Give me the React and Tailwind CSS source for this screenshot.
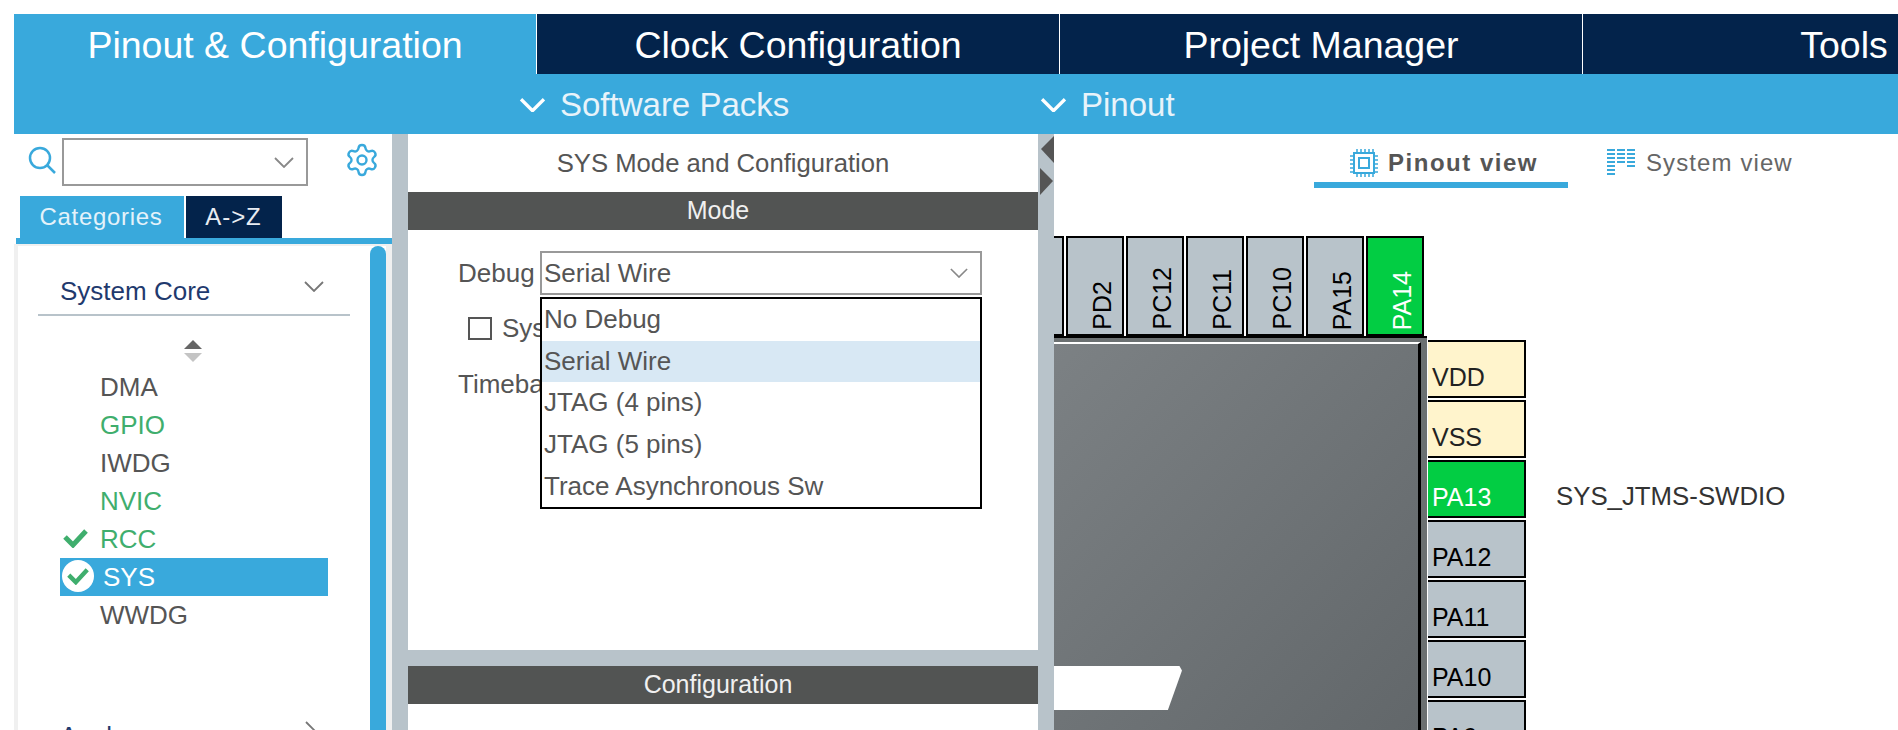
import React from 'react';
import { Settings } from 'lucide-react';

const navTabs = [
  { label: 'Pinout & Configuration', active: true },
  { label: 'Clock Configuration' },
  { label: 'Project Manager' },
  { label: 'Tools' },
];

const ipList = [
  { name: 'DMA' },
  { name: 'GPIO', green: true },
  { name: 'IWDG' },
  { name: 'NVIC', green: true },
  { name: 'RCC', green: true, check: true },
  { name: 'SYS', selected: true },
  { name: 'WWDG' },
];

const debugOptions = ['No Debug', 'Serial Wire', 'JTAG (4 pins)', 'JTAG (5 pins)', 'Trace Asynchronous Sw'];

const topPins = [
  { name: 'PD2' },
  { name: 'PC12' },
  { name: 'PC11' },
  { name: 'PC10' },
  { name: 'PA15' },
  { name: 'PA14', on: true },
];

const rightPins = [
  { name: 'VDD', power: true },
  { name: 'VSS', power: true },
  { name: 'PA13', on: true, signal: 'SYS_JTMS-SWDIO' },
  { name: 'PA12' },
  { name: 'PA11' },
  { name: 'PA10' },
  { name: 'PA9' },
];

const Chevron = ({ className }) => (
  <svg viewBox="0 0 20 11" className={className} fill="none" stroke="currentColor" strokeWidth="1.8">
    <path d="M1 1l9 9 9-9" />
  </svg>
);

const Check = ({ className }) => (
  <svg viewBox="0 0 25 20" className={className} fill="none" stroke="#3fae6d" strokeWidth="5">
    <path d="M2 9l8 8L23 3" />
  </svg>
);

const ChipIcon = () => (
  <svg viewBox="0 0 28 28" className="w-[28px] h-[28px]" fill="none" stroke="#39a9dc" strokeWidth="2">
    <rect x="4" y="4" width="20" height="20" />
    <rect x="9" y="9" width="10" height="10" />
    <path d="M7 0v3M11 0v3M15 0v3M19 0v3M23 0v3M7 25v3M11 25v3M15 25v3M19 25v3M23 25v3M0 7h3M0 11h3M0 15h3M0 19h3M0 23h3M25 7h3M25 11h3M25 15h3M25 19h3M25 23h3" strokeWidth="1.5" />
  </svg>
);

const SystemIcon = () => (
  <svg viewBox="0 0 28 28" className="w-[28px] h-[28px]" fill="#39a9dc">
    {[0, 4, 8, 12, 16, 20, 24].map((y) => (
      <rect key={y} x="0" y={y} width="8" height="2" />
    ))}
    {[0, 4, 8, 12].map((y) => (
      <rect key={y} x="10" y={y} width="8" height="2" />
    ))}
    {[0, 4, 8, 12, 16].map((y) => (
      <rect key={y} x="20" y={y} width="8" height="2" />
    ))}
  </svg>
);

const LeftPanel = () => (
  <div className="w-[378px] flex flex-col bg-white overflow-hidden">
    <div className="flex items-start h-[52px] pt-[4px] pl-[14px]">
      <svg viewBox="0 0 28 28" className="w-[28px] h-[28px] mt-[8px]" fill="none" stroke="#39a9dc" strokeWidth="2.5">
        <circle cx="12" cy="12" r="10" />
        <path d="M19 19l8 8" />
      </svg>
      <div className="ml-[6px] w-[246px] h-[48px] border-2 border-[#999] flex items-center justify-end pr-[12px] text-[#888]">
        <Chevron className="w-[20px] h-[11px]" />
      </div>
      <Settings className="ml-[36px] mt-[4px] w-[36px] h-[36px] text-[#39a9dc]" strokeWidth={1.6} />
    </div>
    <div className="flex gap-[2px] pl-[6px] pt-[10px]">
      <div className="w-[164px] h-[42px] bg-[#39a9dc] text-[#e4f2fa] text-[24px] tracking-[0.7px] flex items-center justify-center pr-[2px]">Categories</div>
      <div className="w-[96px] h-[42px] bg-[#03234b] text-[#e8ecf2] text-[24px] tracking-[0.9px] flex items-center justify-center pr-[1px]">A-&gt;Z</div>
    </div>
    <div className="h-[6px] ml-[2px] bg-[#39a9dc]" />
    <div className="flex flex-1 border-l-4 border-t-2 border-[#f0f0f0] min-h-0">
      <div className="flex-1 min-w-0">
        <div className="mx-[20px] h-[70px] border-b-2 border-[#b8c3ca] flex items-end justify-between pl-[22px] pr-[26px] pb-[8px]">
          <span className="text-[26px] leading-[30px] text-[#1f3a6e]">System Core</span>
          <Chevron className="w-[20px] h-[11px] text-[#777] mb-[14px]" />
        </div>
        <div className="flex justify-center pr-[2px] mt-[24px] h-[22px]">
          <svg viewBox="0 0 18 22" className="w-[18px] h-[22px]">
            <path d="M9 0l9 9H0z" fill="#666" />
            <path d="M9 22l9-9H0z" fill="#c4c4c4" />
          </svg>
        </div>
        <ul className="ml-[42px] w-[268px] mt-[6px]">
          {ipList.map((ip) => (
            <li
              key={ip.name}
              className={`h-[38px] flex items-center relative text-[26px] ${ip.selected ? 'bg-[#39a9dc] text-white pl-[43px]' : 'pl-[40px]'} ${ip.green ? 'text-[#3fae6d]' : ''} ${!ip.green && !ip.selected ? 'text-[#555]' : ''}`}
            >
              {ip.check && <Check className="absolute left-[3px] top-[8px] w-[25px] h-[20px]" />}
              {ip.selected && (
                <span className="absolute left-[2px] top-[2px] w-[32px] h-[32px] rounded-full bg-white flex items-center justify-center">
                  <Check className="w-[22px] h-[18px]" />
                </span>
              )}
              {ip.name}
            </li>
          ))}
        </ul>
        <div className="mt-[87px] flex justify-between pl-[42px] pr-[54px] text-[26px] leading-[30px] text-[#1f3a6e]">
          <span>Analog</span>
          <svg viewBox="0 0 11 20" className="w-[11px] h-[20px] text-[#777]" fill="none" stroke="currentColor" strokeWidth="1.8">
            <path d="M1 1l9 9-9 9" />
          </svg>
        </div>
      </div>
      <div className="w-[16px] bg-[#39a9dc] rounded-t-full" />
      <div className="w-[6px] bg-[#f0f0f0]" />
    </div>
  </div>
);

const MiddlePanel = () => (
  <div className="w-[630px] flex flex-col bg-[#b8c3ca]">
    <div className="h-[516px] bg-white flex flex-col">
      <div className="h-[58px] flex items-center justify-center text-[25.7px] text-[#555]">SYS Mode and Configuration</div>
      <div className="h-[38px] bg-[#525453] text-[#f0f0f0] text-[25px] flex items-center justify-center pr-[10px]">Mode</div>
      <div className="relative flex-1 text-[26px] text-[#555]">
        <div className="flex items-center mt-[21px] pl-[50px]">
          <span className="w-[82px]">Debug</span>
          <div className="w-[442px] h-[44px] border-2 border-[#999] flex items-center justify-between pl-[2px] pr-[12px]">
            <span>Serial Wire</span>
            <Chevron className="w-[18px] h-[10px] text-[#888]" />
          </div>
        </div>
        <div className="flex items-center gap-[10px] mt-[22px] pl-[60px] h-[22px]">
          <span className="w-[24px] h-[23px] border-2 border-[#555] shrink-0" />
          <span>Sys</span>
        </div>
        <div className="mt-[30px] pl-[50px] leading-[30px]">Timeba</div>
        <ul className="absolute left-[132px] top-[67px] w-[442px] h-[212px] border-2 border-black bg-white">
          {debugOptions.map((opt) => (
            <li
              key={opt}
              className={`h-[41.6px] flex items-center pl-[2px] ${opt === 'Serial Wire' ? 'bg-[#d8e8f4]' : ''}`}
            >
              {opt}
            </li>
          ))}
        </ul>
      </div>
    </div>
    <div className="mt-[16px] h-[38px] bg-[#525453] text-[#f0f0f0] text-[25px] flex items-center justify-center pr-[10px]">Configuration</div>
    <div className="flex-1 bg-white" />
  </div>
);

const Splitter = () => (
  <div className="w-[16px] bg-[#b8c3ca] shrink-0">
    <svg viewBox="0 0 16 62" className="w-[16px] h-[62px]" fill="#555">
      <path d="M3 15L16 2v27z" />
      <path d="M2 34l13 13L2 61z" />
    </svg>
  </div>
);

const PinoutPanel = () => (
  <div className="flex-1 min-w-0 flex flex-col bg-white overflow-hidden">
    <div className="flex h-[102px] pl-[260px]">
      <div className="w-[254px] h-[54px] border-b-[6px] border-[#39a9dc] flex items-center justify-center gap-[10px] pt-[9px] pl-[6px]">
        <ChipIcon />
        <span className="text-[24px] font-bold tracking-[1.5px] text-[#555]">Pinout view</span>
      </div>
      <div className="ml-[39px] h-[58px] flex items-center gap-[11px]">
        <SystemIcon />
        <span className="text-[24px] tracking-[1.1px] text-[#666]">System view</span>
      </div>
    </div>
    <div className="flex gap-[2px] h-[100px]">
      <div className="w-[10px] border-2 border-l-0 border-black bg-[#b8c3ca]" />
      {topPins.map((pin) => (
        <div
          key={pin.name}
          className={`w-[58px] border-2 border-black flex justify-end items-end pb-[4px] pr-[6px] ${pin.on ? 'bg-[#02cd43] text-white' : 'bg-[#b8c3ca] text-black'}`}
        >
          <span className="[writing-mode:vertical-rl] rotate-180 text-[25px] leading-[28px]">{pin.name}</span>
        </div>
      ))}
    </div>
    <div className="flex flex-1 min-h-0">
      <div className="w-[373px] bg-[#6b7071] border-t-2 border-black pt-[4px] pr-[6px] shrink-0">
        <div className="relative h-full border-t-2 border-t-white border-r-[3px] border-r-black bg-linear-to-br from-[#7c8184] to-[#62676a]">
          {/* white notch at the height of the Configuration bar */}
          <div className="absolute left-0 top-[322px] w-[128px] h-[44px] bg-white [clip-path:polygon(0_0,98%_0,100%_10%,89%_100%,0_100%)]" />
        </div>
      </div>
      <div className="ml-[1px] pt-[4px] flex-1">
        {rightPins.map((pin) => (
          <div key={pin.name} className="flex items-end mb-[2px]">
            <div
              className={`w-[98px] h-[58px] border-y-2 border-r-2 border-black flex items-end pb-[4px] pl-[4px] text-[25px] leading-[30px] ${pin.power ? 'bg-[#fff4cc] text-[#222]' : pin.on ? 'bg-[#02cd43] text-white' : 'bg-[#b8c3ca] text-black'}`}
            >
              {pin.name}
            </div>
            {pin.signal && <span className="ml-[30px] pb-[7px] text-[25.8px] leading-[30px] text-[#333]">{pin.signal}</span>}
          </div>
        ))}
      </div>
    </div>
  </div>
);

export default function App() {
  return (
    <div className="w-[1898px] h-[730px] overflow-hidden bg-white pt-[14px] pl-[14px] font-['Liberation_Sans',Arial,sans-serif]">
      <div className="bg-[#39a9dc] h-[120px] w-[1884px] overflow-hidden">
        <div className="flex gap-[1px] h-[60px] w-[2100px] bg-white">
          {navTabs.map((tab) => (
            <div
              key={tab.label}
              className={`w-[522px] flex items-center justify-center pt-[3px] text-[37.5px] text-white ${tab.active ? 'bg-[#39a9dc]' : 'bg-[#03234b]'}`}
            >
              {tab.label}
            </div>
          ))}
        </div>
        <div className="flex h-[60px] items-center pt-[1px] text-[33px] text-[#e8f3fa]">
          <div className="w-[505px]" />
          <Chevron className="w-[27px] h-[14px] text-white stroke-[2.6px]" />
          <span className="ml-[14px] w-[480px]">Software Packs</span>
          <Chevron className="w-[27px] h-[14px] text-white stroke-[2.6px]" />
          <span className="ml-[14px]">Pinout</span>
        </div>
      </div>
      <div className="flex h-[596px] w-[1884px]">
        <LeftPanel />
        <div className="w-[16px] bg-[#b8c3ca] shrink-0" />
        <MiddlePanel />
        <Splitter />
        <PinoutPanel />
      </div>
    </div>
  );
}
